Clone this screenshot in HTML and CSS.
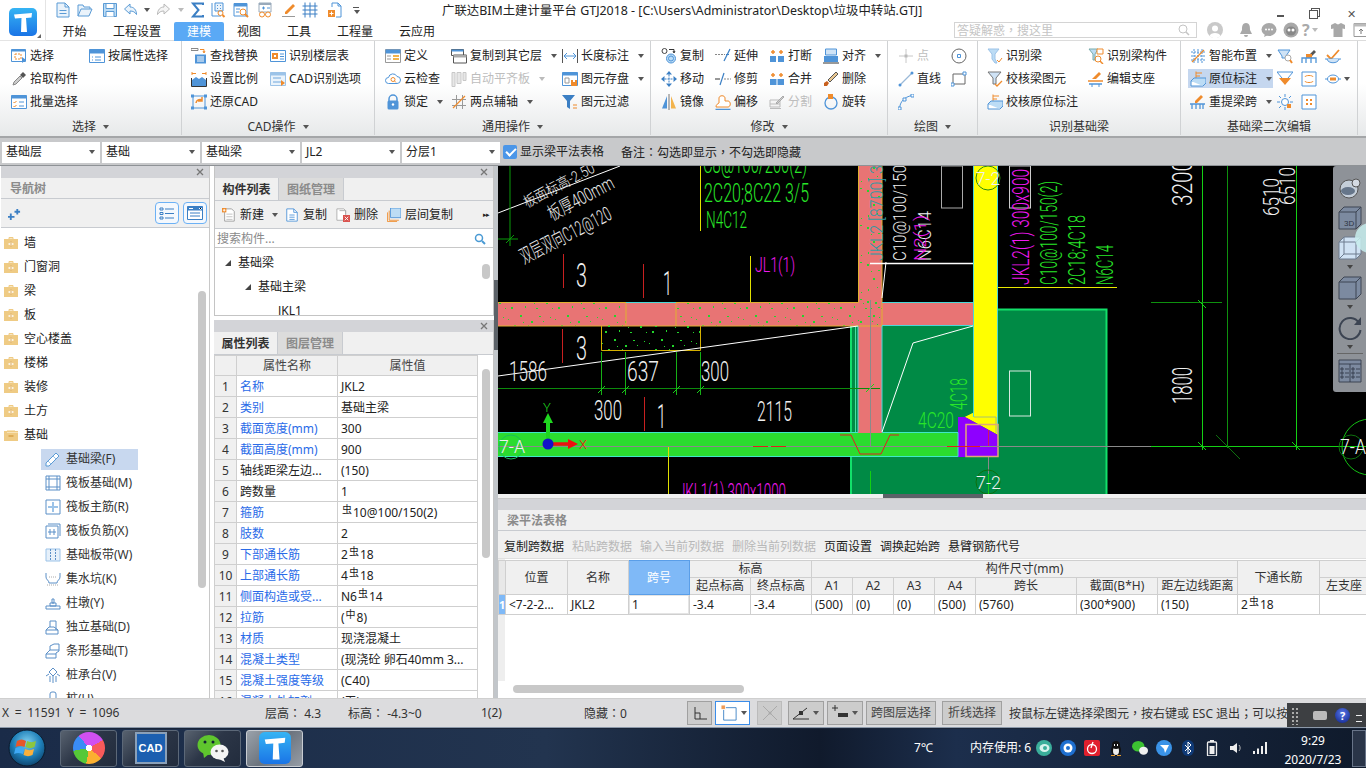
FILE: index.html
```html
<!DOCTYPE html>
<html lang="zh-CN">
<head>
<meta charset="utf-8">
<title>广联达BIM土建计量平台 GTJ2018</title>
<link rel="stylesheet" href="styles.css">
</head>
<body>
<svg class="sprite" aria-hidden="true">
<defs>
<linearGradient id="gT" x1="0" y1="0" x2="0" y2="1"><stop offset="0" stop-color="#35b4f4"/><stop offset="1" stop-color="#1a74e6"/></linearGradient>
<radialGradient id="gOrb" cx=".5" cy=".35" r=".7"><stop offset="0" stop-color="#7fd0f0"/><stop offset=".55" stop-color="#1e7fb8"/><stop offset="1" stop-color="#0b3a62"/></radialGradient>
</defs>
<symbol id="t-logo" viewBox="0 0 28 28"><rect width="28" height="28" rx="5" fill="url(#gT)"/><path d="M5 6.500 23 5l-.5 4.500-5.500.5 1 14h-6l.5-14-6.500.5z" fill="#fff"/></symbol>
<symbol id="p-x" viewBox="0 0 8 8"><path d="m1 1 6 6M7 1 1 7" stroke="#777" stroke-width="1.300"/></symbol>
<symbol id="q-doc" viewBox="0 0 16 16"><path d="M2 1h8l4 4v10H2z" fill="#eaf3fb" stroke="#5b9bd5"/><path d="M10 1v4h4M4.500 8.500h7M4.500 11.500h7" fill="none" stroke="#5b9bd5"/></symbol>
<symbol id="q-open" viewBox="0 0 16 16"><path d="M1 14V3h5l1 2h6v2" fill="#eaf3fb" stroke="#5b9bd5"/><path d="M1 14 4 7h11l-3 7z" fill="#eaf3fb" stroke="#5b9bd5"/></symbol>
<symbol id="q-save" viewBox="0 0 16 16"><path d="M1.500 1.500h13v13h-13z" fill="#bcdcf5" stroke="#5b9bd5"/><path d="M4 1.500h8v5H4z" fill="#fff" stroke="#5b9bd5"/><path d="M4 14.500v-5h8v5" fill="#fff" stroke="#5b9bd5"/></symbol>
<symbol id="q-undo" viewBox="0 0 16 16"><path d="M7 2 1.500 7 7 12V9c3 0 5 1 6.500 3.500C13.500 8 11 5 7 5z" fill="#eaf3fb" stroke="#5b9bd5"/></symbol>
<symbol id="q-redo" viewBox="0 0 16 16"><path d="M9 2l5.500 5L9 12V9c-3 0-5 1-6.500 3.500C2.500 8 5 5 9 5z" fill="#f5f5f5" stroke="#b8b8b8"/></symbol>
<symbol id="q-sum" viewBox="0 0 16 16"><path d="M13 3V1.500H3L8.500 8 3 14.500h10V13" fill="none" stroke="#3b7fc4" stroke-width="2"/></symbol>
<symbol id="q-bs" viewBox="0 0 16 16"><path d="M2 1v13h9" fill="none" stroke="#4f94d8"/><path d="M5 1h8v8H5z" fill="#eaf3fb" stroke="#4f94d8"/><path d="M7 3h1v1H7zM10 3h1v1h-1zM7 6h1v1H7zM10 6h1v1h-1z" fill="#4f94d8"/><circle cx="10.500" cy="11" r="2.500" fill="none" stroke="#ef8b2c"/><path d="m12.500 13 2 2" stroke="#ef8b2c" stroke-width="2"/></symbol>
<symbol id="q-ts" viewBox="0 0 16 16"><path d="M1 1.500h13V14H1z" fill="#fff" stroke="#4f94d8"/><path d="M1 1.500h13v3H1z" fill="#4f94d8"/><path d="M3 7h4M3 10h3" stroke="#4f94d8"/><circle cx="10" cy="10" r="3" fill="#fff" stroke="#ef8b2c"/><path d="m12 12 3 3" stroke="#ef8b2c" stroke-width="2"/></symbol>
<symbol id="q-gl" viewBox="0 0 16 16"><path d="M2 1h12v9H2z" fill="#fff" stroke="#9ab"/><path d="M2 1h12v2H2z" fill="#9ab"/><path d="M5 6h3M6.500 4.500v3M10 6h3" stroke="#4f94d8"/><circle cx="5" cy="12.500" r="2.500" fill="#fff" stroke="#ef8b2c"/><circle cx="11" cy="12.500" r="2.500" fill="#fff" stroke="#ef8b2c"/><path d="M7.500 12.500h1" stroke="#ef8b2c"/></symbol>
<symbol id="q-pen" viewBox="0 0 16 16"><path d="M4 10 12 2l2 2-8 8H4z" fill="#ef8b2c"/><path d="M1 14.500h13" stroke="#999"/></symbol>
<symbol id="q-grid" viewBox="0 0 16 16"><path d="M.5 4h15M.5 8h15M.5 12h15M3 .5v15M8 .5v15M13 .5v15" stroke="#3b7fc4"/></symbol>
<symbol id="q-plus" viewBox="0 0 16 16"><path d="M5 1h6l3 3v11H9" fill="none" stroke="#4f94d8"/><path d="M5 1v4M11 1v3h3" fill="none" stroke="#4f94d8"/><path d="M1 8h7v7H1z" fill="#ef8b2c"/><path d="M4.500 9.500v4M2.500 11.500h4" stroke="#fff"/></symbol>
<symbol id="r-sel" viewBox="0 0 16 16"><path d="M.5 1.500h14v12H.5z" fill="#fff" stroke="#4f94d8"/><path d="M.5 1.500h14v2H.5z" fill="#4f94d8"/><path d="M4 6h6v5H4z" fill="none" stroke="#ef8b2c" stroke-dasharray="2 1"/><path d="M11 9v6l4-3z" fill="#4f94d8"/></symbol>
<symbol id="r-attr" viewBox="0 0 16 16"><path d="M.5 1.500h15v13H.5z" fill="#fff" stroke="#4f94d8"/><path d="M.5 1.500h15v4H.5z" fill="#4f94d8"/><path d="M6 9h6M6 12h6M3 9h1M3 12h1" stroke="#4f94d8"/></symbol>
<symbol id="r-drop" viewBox="0 0 16 16"><path d="M3 11 9 5l2 2-6 6-3 1z" fill="#ccc" stroke="#888"/><path d="m9 4 3-3 3 3-3 3z" fill="#555"/></symbol>
<symbol id="r-batch" viewBox="0 0 16 16"><path d="M.5 1.500h15v13H.5z" fill="#fff" stroke="#4f94d8"/><path d="M.5 1.500h15v3H.5z" fill="#4f94d8"/><path d="M2.500 8l1 1 2-2M2.500 12l1 1 2-2" fill="none" stroke="#ef8b2c"/><path d="M8 8h5M8 12h5" stroke="#4f94d8"/></symbol>
<symbol id="r-find" viewBox="0 0 16 16"><path d="M0 .5h7v2H0z" fill="none" stroke="#888"/><path d="M9 1.500h4v3M12 3l1 2 1-2" fill="none" stroke="#ef8b2c"/><path d="M4 6.500h11v9H4z" fill="#4f94d8"/><path d="M6 9h7M6 11h7M6 13h7" stroke="#fff"/></symbol>
<symbol id="r-scale" viewBox="0 0 16 16"><path d="M1 9l4-3 3 2 3-2 4 3v6H1z" fill="#4f94d8"/><path d="M.5 7v8.500h15V7" fill="none" stroke="#333"/><path d="M1 2.500h4M11 2.500h4M1 1v3M15 1v3" stroke="#ef8b2c"/></symbol>
<symbol id="r-restore" viewBox="0 0 16 16"><path d="M2 2h12v12H2z" fill="none" stroke="#4f94d8"/><path d="M0 .5h3v3H0zM13 .5h3v3h-3zM0 12.500h3v3H0zM13 12.500h3v3h-3z" fill="#4f94d8"/><path d="M5 9a4 4 0 0 1 6-3M11 3v4H7" fill="none" stroke="#ef8b2c" stroke-width="1.500"/></symbol>
<symbol id="r-floor" viewBox="0 0 16 16"><path d="M.5 2.500h15v11H.5z" fill="#fff" stroke="#4f94d8"/><path d="M2 5h6v6H2z" fill="#ef8b2c"/><path d="M4 7h2v2H4z" fill="#fff"/><path d="M10 6h4M10 8.500h4M10 11h4" stroke="#4f94d8"/></symbol>
<symbol id="r-cad" viewBox="0 0 16 16"><path d="M.5 1.500h15v13H.5z" fill="#eaf3fb" stroke="#9cc3e8"/><path d="M.5 1.500h15v3H.5z" fill="#9cc3e8"/><path d="M3 7h8M3 11h8" stroke="#6fa6dc"/><path d="M11 9v6l4-3z" fill="#ef8b2c"/></symbol>
<symbol id="r-def" viewBox="0 0 16 16"><path d="M.5 1.500h15v13H.5z" fill="#fff" stroke="#999"/><path d="M.5 1.500h15v4H.5z" fill="#4f94d8"/><path d="M8 7h6v2H8zM8 10h6v2H8z" fill="#f2b34c"/><path d="M2 8h4M2 11h4" stroke="#999"/></symbol>
<symbol id="r-cloud" viewBox="0 0 16 16"><path d="M3.500 12.500a3 3 0 0 1 0-6 4.500 4.500 0 0 1 8.500-1 3.500 3.500 0 0 1 0 7z" fill="#fff" stroke="#4f94d8"/><circle cx="8" cy="8.500" r="2" fill="none" stroke="#ef8b2c"/><path d="m9.500 10 1.500 1.500" stroke="#ef8b2c"/></symbol>
<symbol id="r-lock" viewBox="0 0 16 16"><path d="M4 7V5a4 4 0 0 1 8 0v2" fill="none" stroke="#4f94d8" stroke-width="1.500"/><rect x="2.500" y="6.500" width="11" height="9" rx="1.500" fill="#4f94d8"/><circle cx="8" cy="10.500" r="1.200" fill="#fff"/></symbol>
<symbol id="r-copyl" viewBox="0 0 16 16"><path d="M.5 1.500h12v6H.5z" fill="#fff" stroke="#555"/><path d="M.5 1.500h12v2H.5z" fill="#4f94d8"/><path d="M2.500 7h13v8h-13z" fill="#fff" stroke="#555"/><path d="M2.500 7h13v2.500h-13z" fill="#aaa"/></symbol>
<symbol id="r-auto" viewBox="0 0 16 16"><path d="M1 1.500h3v14H1zM6 1.500h4v11H6zM12 1.500h3v8h-3z" fill="#e7e7e7" stroke="#c8c8c8"/></symbol>
<symbol id="r-two" viewBox="0 0 16 16"><path d="M1 5.500h14M1 11.500h14M5.500 1v14M11.500 1v14" stroke="#999"/><path d="M2 14 14 2" stroke="#ef8b2c" stroke-width="1.300"/></symbol>
<symbol id="r-len" viewBox="0 0 16 16"><path d="M.5 1v14M15.500 1v14" stroke="#555"/><path d="M2 8h12M5 5 2 8l3 3M11 5l3 3-3 3" fill="none" stroke="#4f94d8"/></symbol>
<symbol id="r-store" viewBox="0 0 16 16"><path d="M.5 1.500h15v13H.5z" fill="#fff" stroke="#4f94d8"/><path d="M.5 1.500h15v3H.5z" fill="#4f94d8"/><path d="M3 7h4v5H3z" fill="none" stroke="#999"/><path d="M9 9h6v6H9z" fill="#ef8b2c"/><path d="M11 9h2v2h-2z" fill="#fff"/></symbol>
<symbol id="r-filter" viewBox="0 0 16 16"><path d="M0 1h13L8 7v8L5 13V7z" fill="#3b7fc4"/><path d="M11 11h4M11 14h4" stroke="#ef8b2c"/></symbol>
<symbol id="r-copy" viewBox="0 0 16 16"><circle cx="3.500" cy="3" r="2.500" fill="#fff" stroke="#444"/><circle cx="10" cy="10.500" r="4.500" fill="#bcdcf5" stroke="#4f94d8"/><circle cx="10" cy="10.500" r="2.500" fill="none" stroke="#4f94d8"/><path d="M8 1.500h5v3M12 3l1 2 1-2" fill="none" stroke="#333"/></symbol>
<symbol id="r-move" viewBox="0 0 16 16"><path d="M8 0l3 3.500H5zM8 16l-3-3.500h6zM0 8l3.500-3v6zM16 8l-3.500 3V5z" fill="#3b7fc4"/><path d="M3.500 8h9M8 3.500v9" stroke="#3b7fc4" stroke-dasharray="2 1"/></symbol>
<symbol id="r-mirror" viewBox="0 0 16 16"><path d="M1 14.500 6 2v12.500z" fill="#4f94d8"/><path d="M10 2l5 12.500h-5z" fill="#f2b34c"/><path d="M8 0v16" stroke="#777"/></symbol>
<symbol id="r-ext" viewBox="0 0 16 16"><path d="M0 6.500h10" stroke="#888" stroke-dasharray="2 1"/><path d="M15 1 9 13" stroke="#3b7fc4" stroke-width="1.200"/><path d="M11 6.500h3" stroke="#3b7fc4"/></symbol>
<symbol id="r-trim" viewBox="0 0 16 16"><path d="M0 8h5" stroke="#333"/><path d="M9 8h7" stroke="#888" stroke-dasharray="2 1"/><path d="M9 2 5 14" stroke="#3b7fc4" stroke-width="1.200"/></symbol>
<symbol id="r-off" viewBox="0 0 16 16"><path d="M1 13c0-3 2-3 3-4V4c0-3 6-3 6 0v3h3c3 0 3 6 0 6z" fill="#fff" stroke="#ef8b2c"/><path d="M.5 15.500h15" stroke="#4f94d8" stroke-width="1.500"/></symbol>
<symbol id="r-break" viewBox="0 0 16 16"><path d="M1 8h6v6H1zM9 8h6v6H9z" fill="#4f94d8"/><path d="M4 2v4M2 4h4M12 2v4M10 4h4" stroke="#ef8b2c" stroke-width="1.500"/></symbol>
<symbol id="r-merge" viewBox="0 0 16 16"><path d="M1 8h14v6H1z" fill="#4f94d8"/><path d="M8 8v6" stroke="#fff"/><path d="M4 2v4M2 4h4M12 2v4M10 4h4" stroke="#ef8b2c" stroke-width="1.500"/></symbol>
<symbol id="r-split" viewBox="0 0 16 16"><path d="M1 6h10v7H1z" fill="#f4f4f4" stroke="#bbb"/><path d="M1 14.500h11M1 10h10" stroke="#bbb"/><path d="m7 9 7-7 1 1-7 7z" fill="#ccc" stroke="#aaa"/></symbol>
<symbol id="r-align" viewBox="0 0 16 16"><path d="M2.500 1h11v6h-11z" fill="#cfe3f6" stroke="#4f94d8"/><path d="M1 8h14v6H1z" fill="#4f94d8"/><path d="M0 15h16" stroke="#333"/></symbol>
<symbol id="r-del" viewBox="0 0 16 16"><path d="m1 12 3-2 2 2-2 3H1z" fill="#c8601e"/><path d="M5 9 13 1l2 2-8 8z" fill="#e8c690" stroke="#555"/></symbol>
<symbol id="r-rot" viewBox="0 0 16 16"><circle cx="8" cy="9" r="6" fill="none" stroke="#4f94d8" stroke-width="1.300"/><path d="M5 0h5v5H5z" fill="#ef8b2c"/></symbol>
<symbol id="r-pt" viewBox="0 0 16 16"><path d="M8 1v14M1 8h14" stroke="#c8c8c8"/><rect x="6.500" y="6.500" width="3" height="3" fill="#bbb"/></symbol>
<symbol id="r-line" viewBox="0 0 16 16"><path d="M2 14 14 2" stroke="#9ab9d8" stroke-width="1.300"/><circle cx="2" cy="14" r="1.500" fill="#4f94d8"/><circle cx="14" cy="2" r="1.500" fill="#4f94d8"/></symbol>
<symbol id="r-arc" viewBox="0 0 16 16"><path d="M1.500 14.500C2 8 6 3 14 1.500" fill="none" stroke="#4f94d8"/><path d="M0 13h3v3H0zM5 4h3v3H5zM13 0h3v3h-3z" fill="#fff" stroke="#4f94d8"/></symbol>
<symbol id="r-circ" viewBox="0 0 16 16"><circle cx="8" cy="8" r="7" fill="none" stroke="#666"/><path d="M6.500 6.500h3v3h-3z" fill="#fff" stroke="#4f94d8"/></symbol>
<symbol id="r-rect" viewBox="0 0 16 16"><path d="M2 3h12v10H2z" fill="none" stroke="#666"/><path d="M12 1h3v3h-3zM0 12h3v3H0z" fill="#fff" stroke="#4f94d8"/></symbol>
<symbol id="r-rb" viewBox="0 0 16 16"><path d="M1 1h11L8 6v5l2 4H8L5 11V6z" fill="#bcdcf5" stroke="#9cc3e8"/><path d="m10 12 2 2 3-4" fill="none" stroke="#ef8b2c"/></symbol>
<symbol id="r-rbc" viewBox="0 0 16 16"><path d="M1 1h9L7 6v6L5 12V6z" fill="#bcdcf5" stroke="#7aa"/><path d="M9 1h6v5h-6z" fill="#fff" stroke="#ef8b2c"/><circle cx="10" cy="11" r="3" fill="none" stroke="#ef8b2c"/><path d="m12 13 3 3" stroke="#ef8b2c" stroke-width="1.500"/></symbol>
<symbol id="r-chk" viewBox="0 0 16 16"><path d="M1 1h13L9 7v6H6V7z" fill="#cfe3f6" stroke="#777"/><path d="m8 13 2 2 5-5" fill="none" stroke="#ef8b2c" stroke-width="1.300"/></symbol>
<symbol id="r-sup" viewBox="0 0 16 16"><path d="m4 8 7-7 2 2-5 5z" fill="#ef8b2c"/><path d="M0 10h15" stroke="#ef8b2c" stroke-width="1.500"/><path d="M1 13h13" stroke="#4f94d8" stroke-width="1.500"/><path d="M4 13v3M11 13v3" stroke="#4f94d8"/></symbol>
<symbol id="r-orig" viewBox="0 0 16 16"><path d="M6 .5v7M6 2h6M6 5h4" fill="none" stroke="#ef8b2c"/><path d="M1 10h12v5H1z" fill="#fff" stroke="#4f94d8"/><path d="M1 10l3-3h12v5l-3 3" fill="#bcdcf5" stroke="#4f94d8"/></symbol>
<symbol id="r-smart" viewBox="0 0 16 16"><path d="M1 4h14M1 8h14M1 12h14M4 1v14M8 1v14M12 1v14" stroke="#4f94d8" stroke-dasharray="2 1"/><path d="M2 14 14 2" stroke="#ef8b2c" stroke-width="1.300"/></symbol>
<symbol id="r-ret" viewBox="0 0 16 16"><path d="m5 7 6-6 2 2-6 6H5z" fill="#ef8b2c"/><path d="M0 10h15M2 10v5M13 10v5M6 10v5M10 10v5" fill="none" stroke="#4f94d8" stroke-width="1.300"/></symbol>
<symbol id="r-a1" viewBox="0 0 16 16"><path d="M1 2h12l-4 6v2H5V8z" fill="#cfe3f6" stroke="#4f94d8"/><circle cx="11" cy="10" r="3" fill="#fff" stroke="#aaa"/><path d="m13 12 2 3" stroke="#ef8b2c" stroke-width="2"/></symbol>
<symbol id="r-a2" viewBox="0 0 16 16"><path d="m7 8 6-6 2 2-6 6z" fill="#555"/><path d="M5 6h6v4H5z" fill="#ef8b2c"/><path d="M1 15v-5h14v5M5 10v5M10 10v5" fill="none" stroke="#4f94d8" stroke-width="1.300"/></symbol>
<symbol id="r-a3" viewBox="0 0 16 16"><path d="m2 7 4 4 8-9" fill="none" stroke="#ef8b2c" stroke-width="1.800"/><path d="M0 11h16" stroke="#4f94d8"/><path d="M2 11c1 5 11 5 12 0" fill="#cfe3f6" stroke="#4f94d8"/></symbol>
<symbol id="r-b1" viewBox="0 0 16 16"><path d="M0 1h16l-5 6v2H5V7z" fill="#fff" stroke="#4f94d8"/><path d="M2 7h12l-6 7z" fill="#ef8b2c"/></symbol>
<symbol id="r-b2" viewBox="0 0 16 16"><path d="M1 1h14v14H1z" fill="#fff" stroke="#4f94d8"/><path d="M4 6c0-2 8-2 8 0M4 10c0 2 8 2 8 0" fill="none" stroke="#ef8b2c"/></symbol>
<symbol id="r-b3" viewBox="0 0 16 16"><path d="M0 8h16" stroke="#4f94d8"/><ellipse cx="8" cy="8" rx="5.500" ry="4" fill="#fff" stroke="#4f94d8"/><path d="M5 6.500h6v3H5z" fill="#ef8b2c"/></symbol>
<symbol id="r-c1" viewBox="0 0 16 16"><circle cx="8" cy="8" r="3.500" fill="#fff" stroke="#4f94d8"/><path d="M8 0v3M8 13v3M0 8h3M13 8h3M2 2l2 2M14 2l-2 2M2 14l2-2" stroke="#4f94d8"/><path d="M10 10h4v4h-4z" fill="#ef8b2c"/></symbol>
<symbol id="r-c2" viewBox="0 0 16 16"><path d="M1 1h14v14H1z" fill="#fff" stroke="#4f94d8"/><path d="M5 5h2v2H5zM9 5h2v2H9zM5 9h2v2H5zM9 9h2v2H9z" fill="#ef8b2c"/></symbol>
<symbol id="n-stars" viewBox="0 0 14 14"><path d="M3 6v7M0 9.500h7M10 1v6M7 4h6" stroke="#3b7fc4" stroke-width="2"/></symbol>
<symbol id="n-list" viewBox="0 0 16 16"><path d="M1 3h3v2H1zM1 7.500h3v2H1zM1 12h3v2H1z" fill="none" stroke="#3b7fc4"/><path d="M6 4h9M6 8.500h9M6 13h9" stroke="#3b7fc4"/></symbol>
<symbol id="n-win" viewBox="0 0 16 16"><path d="M.5 1.500h15v13H.5z" fill="#fff" stroke="#3b7fc4"/><path d="M.5 1.500h15v4H.5z" fill="#3b7fc4"/><path d="M2 3.500h4M12 3l1.500 1.500L15 3" stroke="#fff"/><path d="M3 8h10M3 11h10" stroke="#3b7fc4"/></symbol>
<symbol id="n-fold" viewBox="0 0 14 14"><path d="M0 3h14v10H0z" fill="#efcb84"/><path d="M5 1.500h4V3H5z" fill="none" stroke="#efcb84"/><path d="M4.500 8h5M7 5.500v5" stroke="#fff" stroke-width="1.300"/><path d="M6 5h2v6H6z" fill="#d69b3d" opacity=".45"/></symbol>
<symbol id="n-open" viewBox="0 0 14 14"><path d="M0 3h14v10H0z" fill="#efcb84"/><path d="M3 4.500h11M3 2.500h8" stroke="#f7e3b8"/><path d="M4.500 8h5" stroke="#d69b3d" stroke-width="1.300"/></symbol>
<symbol id="n-beam" viewBox="0 0 16 16"><path d="M1 12 11 2l3 3L4 15H1z" fill="#fff" stroke="#5b9bd5"/><path d="m3 10 3 3M8 5l3 3" stroke="#9cc3e8"/></symbol>
<symbol id="n-raft" viewBox="0 0 16 16"><path d="M1 1h14v14H1z" fill="none" stroke="#5b8fc7"/><path d="M4 4h8v8H4zM1 4h3M12 4h3M1 12h3M12 12h3M4 1v3M12 1v3M4 12v3M12 12v3" fill="none" stroke="#5b8fc7"/></symbol>
<symbol id="n-rmain" viewBox="0 0 16 16"><path d="M1 1h14v14H1z" fill="none" stroke="#5b8fc7"/><path d="M8 3v10M3 8h10" stroke="#9cc3e8" stroke-width="2"/></symbol>
<symbol id="n-rneg" viewBox="0 0 16 16"><path d="M3 1h12v12" fill="none" stroke="#5b8fc7"/><path d="M1 3h12v12H1z" fill="#fff" stroke="#5b8fc7"/><path d="M5 6v6M9 6v6M3 9h8" stroke="#5b8fc7"/></symbol>
<symbol id="n-band" viewBox="0 0 16 16"><path d="M1 2h14v12H1z" fill="#e6f0fa" stroke="#9cc3e8"/><path d="M5.500 2v12M10.500 2v12" stroke="#5b8fc7" stroke-dasharray="2 1"/></symbol>
<symbol id="n-pit" viewBox="0 0 16 16"><path d="M1 2v4c0 3 3 3 3 6h8c0-3 3-3 3-6V2" fill="none" stroke="#5b8fc7"/><path d="M4 6h8M2 14h12" stroke="#aaa" stroke-dasharray="1 1"/></symbol>
<symbol id="n-ped" viewBox="0 0 16 16"><path d="M1 11h14v3H1zM5 8h6v3H5zM7 4h2v4H7z" fill="#fff" stroke="#5b8fc7"/></symbol>
<symbol id="n-ind" viewBox="0 0 16 16"><path d="M1 11h12v4H1zM1 11l3-3h5l4 3M5 8V2h6v9" fill="#fff" stroke="#5b8fc7"/></symbol>
<symbol id="n-strip" viewBox="0 0 16 16"><path d="M1 15v-4l4-4V3l4-2h5v7l-3 2v5z" fill="#fff" stroke="#5b8fc7"/><path d="M1 11h10M5 7h9" stroke="#5b8fc7"/></symbol>
<symbol id="n-cap" viewBox="0 0 16 16"><path d="M4 5l4-4 4 4-4 4z" fill="#fff" stroke="#5b8fc7"/><path d="M5 9v6M8 9v7M11 9v6M4 7 1 9M12 7l3 2" stroke="#5b8fc7"/></symbol>
<symbol id="n-pile" viewBox="0 0 16 16"><rect x="5" y="1" width="6" height="14" rx="2" fill="#fff" stroke="#5b8fc7"/></symbol>
<symbol id="m-new" viewBox="0 0 16 16"><path d="M3 1h8l3 3v11H3z" fill="#fff" stroke="#999"/><path d="M5 7h7M5 10h7M5 13h7" stroke="#bbb"/><path d="M0 0h5v5H0z" fill="#ef8b2c"/><path d="M2.500 1v3M1 2.500h3" stroke="#fff"/></symbol>
<symbol id="m-copy" viewBox="0 0 16 16"><path d="M2 1h8l4 4v10H2z" fill="#fff" stroke="#4f94d8"/><path d="M10 1v4h4M5 8h6M5 10.500h6M5 13h6" fill="none" stroke="#4f94d8"/></symbol>
<symbol id="m-del" viewBox="0 0 16 16"><path d="M1 1h8l2 2v11H1z" fill="#fff" stroke="#aaa"/><path d="M4 3h7v4" fill="none" stroke="#aaa"/><path d="M8 8h8v8H8z" fill="#d9534f"/><path d="m10 10 4 4M14 10l-4 4" stroke="#fff"/></symbol>
<symbol id="m-lc" viewBox="0 0 16 16"><path d="M4 0h12v11H4z" fill="#bcdcf5" stroke="#4f94d8"/><path d="M2.500 3v11h11M.5 5v10.500h11" fill="none" stroke="#ef8b2c"/></symbol>
<symbol id="m-search" viewBox="0 0 12 12"><circle cx="5" cy="5" r="3.500" fill="none" stroke="#4a9ad4" stroke-width="1.500"/><path d="m8 8 3 3" stroke="#4a9ad4" stroke-width="2"/></symbol>
<symbol id="m-searchg" viewBox="0 0 12 12"><circle cx="5" cy="5" r="4" fill="none" stroke="#c4c4c4"/><path d="m8 8 3 3" stroke="#c4c4c4" stroke-width="1.500"/></symbol>
<symbol id="s-corner" viewBox="0 0 16 16"><path d="M3 2v12h12M3 8h5v6" fill="none" stroke="#333"/></symbol>
<symbol id="s-box" viewBox="0 0 18 18"><path d="M3 3h14v14H3z" fill="#fff" stroke="#3b7fc4"/><path d="M0 0h5v5H0z" fill="#ef9a54" stroke="#fff"/></symbol>
<symbol id="s-x" viewBox="0 0 16 16"><path d="m1 1 14 14M15 1 1 15" stroke="#aaa"/><circle cx="8" cy="8" r="1.500" fill="#aaa"/></symbol>
<symbol id="s-ang" viewBox="0 0 16 16"><path d="M0 14 14 3M0 14h16" stroke="#333"/><rect x="6" y="6" width="4" height="4" fill="#333"/></symbol>
<symbol id="s-plusb" viewBox="0 0 16 16"><path d="M3 0v6M0 3h6" stroke="#333"/><path d="M6 8h10v4H6z" fill="#333"/></symbol>
<symbol id="w-orb" viewBox="0 0 38 38"><circle cx="19" cy="19" r="18" fill="url(#gOrb)" stroke="#0a1a2c"/><path d="M9 12c3-2 6-2 9 0l-1.500 6c-3-1.500-6-1.500-9 0z" fill="#e8562a"/><path d="M19 12c3 1.500 6 1.500 9 0l-1.500 6c-3 1.500-6 1.500-9 0z" fill="#8dc63f"/><path d="M7.500 19c3-1.500 6-1.500 9 0L15 25c-3-1.500-6-1.500-9 0z" fill="#3fa9f5"/><path d="M17 20c3 1.500 6 1.500 9 0l-1.500 6c-3 1.500-6 1.500-9 0z" fill="#fbb03b"/></symbol>
<symbol id="w-chat" viewBox="0 0 32 28"><ellipse cx="12" cy="11" rx="11.500" ry="10" fill="#5fc52e"/><path d="m6 18 1 6 5-4z" fill="#5fc52e"/><circle cx="8" cy="8" r="1.500" fill="#123"/><circle cx="16" cy="8" r="1.500" fill="#123"/><ellipse cx="22.500" cy="18" rx="9" ry="7.500" fill="#f4f4f4"/><path d="m26 23 2 5-6-3z" fill="#f4f4f4"/><circle cx="19.500" cy="17" r="1.300" fill="#555"/><circle cx="25.500" cy="17" r="1.300" fill="#555"/></symbol>
<symbol id="y-a" viewBox="0 0 16 16"><circle cx="8" cy="8" r="8" fill="#3bae9b"/><ellipse cx="8.500" cy="8" rx="5" ry="4" fill="#d8f3ee"/><circle cx="9" cy="8" r="2" fill="#3bae9b"/></symbol>
<symbol id="y-b" viewBox="0 0 16 16"><circle cx="8" cy="8" r="8" fill="#1e6fd0"/><circle cx="8" cy="8" r="4.500" fill="#fff"/><circle cx="8" cy="8" r="2" fill="#1e6fd0"/></symbol>
<symbol id="y-c" viewBox="0 0 16 16"><rect width="16" height="16" rx="2" fill="#e01f2d"/><circle cx="8" cy="9" r="4.500" fill="none" stroke="#fff" stroke-width="1.300"/><path d="M9 2 7 8" stroke="#fff" stroke-width="1.300"/></symbol>
<symbol id="y-d" viewBox="0 0 16 16"><ellipse cx="8" cy="10" rx="5" ry="6" fill="#111"/><ellipse cx="8" cy="11" rx="3" ry="4" fill="#eee"/><circle cx="8" cy="5" r="4" fill="#111"/><path d="M6 4h1v2H6zM9 4h1v2H9z" fill="#fff"/><path d="M3 15h4v1H3zM9 15h4v1H9z" fill="#e89a2a"/></symbol>
<symbol id="y-e" viewBox="0 0 18 16"><ellipse cx="7" cy="6" rx="7" ry="6" fill="#3cc232"/><ellipse cx="13" cy="11" rx="5" ry="4.500" fill="#f0f0f0"/></symbol>
<symbol id="y-f" viewBox="0 0 16 16"><circle cx="8" cy="8" r="8" fill="#3a93e8"/><path d="M4 5h9l-4 8-1-4z" fill="#fff"/></symbol>
<symbol id="y-g" viewBox="0 0 16 16"><rect x="2" width="12" height="16" rx="6" fill="#0f3a78"/><path d="m5 5 6 6-3 3V2l3 3-6 6" fill="none" stroke="#fff"/></symbol>
<symbol id="y-h" viewBox="0 0 16 16"><path d="M6 0h4v2H6z" fill="#eee"/><rect x="3.500" y="2" width="9" height="14" rx="1" fill="none" stroke="#eee" stroke-width="1.300"/><path d="M5.500 6h5v8h-5z" fill="#eee"/></symbol>
<symbol id="y-i" viewBox="0 0 16 16"><path d="M2 6h3l4-3v10l-4-3H2z" fill="#eee"/><path d="M11 5c1.500 2 1.500 4 0 6" fill="none" stroke="#bbb"/></symbol>
<symbol id="y-j" viewBox="0 0 16 16"><path d="M1 11h2v3H1zM5 8.500h2V14H5zM9 6h2v8H9zM13 2h2v12h-2z" fill="#eee"/></symbol>
<symbol id="f-sphere" viewBox="0 0 24 24"><circle cx="11" cy="13" r="9" fill="#c4ced9" stroke="#555"/><ellipse cx="10" cy="15" rx="7" ry="4" fill="#66768a"/><circle cx="18" cy="7" r="4" fill="#d4dae2" stroke="#555"/></symbol>
<symbol id="f-cube" viewBox="0 0 24 24"><path d="M1 6l5-5h17v17l-5 5H1z" fill="#7c8aa0" stroke="#3c4452"/><path d="M1 6h17v17M18 6l5-5" fill="none" stroke="#3c4452"/></symbol>
<symbol id="f-light" viewBox="0 0 24 24"><path d="M1 6l5-5h17v17l-5 5H1z" fill="#d0e2f4" stroke="#6d7b8e"/><path d="M1 6h17v17M18 6l5-5M1 23l5-5h17M6 1v17" fill="none" stroke="#6d7b8e"/></symbol>
<symbol id="f-rot" viewBox="0 0 24 24"><path d="M21 7A10.500 10.500 0 1 0 22.500 14" fill="none" stroke="#3c4452" stroke-width="2"/><path d="m16 9 7 0V1z" fill="#3c4452"/></symbol>
<symbol id="f-tab" viewBox="0 0 24 24"><path d="M1 1h22v22H1z" fill="#7c8aa0" stroke="#3c4452"/><path d="M1 5h22M12 5v18M3 9h2v2H3zM3 13h2v2H3zM3 17h2v2H3zM14 9h2v2h-2zM14 13h2v2h-2zM14 17h2v2h-2zM7 10h4M7 14h4M7 18h4M18 10h4M18 14h4M18 18h4" fill="none" stroke="#2c3442" stroke-width=".8"/></symbol>
<symbol id="z-avatar" viewBox="0 0 16 16"><circle cx="8" cy="8" r="8" fill="#c9c9c9"/><circle cx="8" cy="6.500" r="3" fill="#fff"/><path d="M2.500 14c1-4 10-4 11 0a8 8 0 0 1-11 0z" fill="#fff"/></symbol>
<symbol id="z-bell" viewBox="0 0 16 16"><path d="M8 1c4 0 4 4 4 7l2 4H2l2-4c0-3 0-7 4-7zM6 13h4a2 2 0 0 1-4 0z" fill="#a8a8a8"/></symbol>
<symbol id="z-chat" viewBox="0 0 16 16"><ellipse cx="8" cy="7.500" rx="7.500" ry="6.500" fill="#a8a8a8"/><path d="m4 12-1 3 4-2z" fill="#a8a8a8"/><circle cx="5" cy="7.500" r="1" fill="#fff"/><circle cx="8" cy="7.500" r="1" fill="#fff"/><circle cx="11" cy="7.500" r="1" fill="#fff"/></symbol>
<symbol id="z-face" viewBox="0 0 16 16"><circle cx="8" cy="8" r="7.500" fill="#a8a8a8"/><ellipse cx="8" cy="9" rx="5" ry="4.500" fill="#888"/><circle cx="6" cy="8" r="1.500" fill="#fff"/><circle cx="10" cy="8" r="1.500" fill="#fff"/></symbol>
<symbol id="z-shirt" viewBox="0 0 16 16"><path d="M5 1 1 3v4l2.500-.5V15h9V6.500L15 7V3l-4-2-3 1.500z" fill="#a8a8a8"/></symbol>
<symbol id="z-up" viewBox="0 0 16 16"><path d="M1 1.500h14v13H1z" fill="#fff" stroke="#999"/><path d="M1 1.500h14v3H1z" fill="#bbb"/><path d="M8 7v5M6 9l2-2 2 2" fill="none" stroke="#777"/></symbol>
</svg>

<header class="top">
  <div class="logo"><svg class="logo-t"><use href="#t-logo"/></svg><i class="logo-corner"></i></div>
  <div class="top-main">
    <div class="qrow">
      <div class="qa">
        <svg class="ic q"><use href="#q-doc"/></svg><svg class="ic q"><use href="#q-open"/></svg><svg class="ic q"><use href="#q-save"/></svg><svg class="ic q"><use href="#q-undo"/></svg><i class="caret"></i><svg class="ic q"><use href="#q-redo"/></svg><i class="caret light"></i><svg class="ic q"><use href="#q-sum"/></svg><svg class="ic q"><use href="#q-bs"/></svg><svg class="ic q"><use href="#q-ts"/></svg><svg class="ic q"><use href="#q-gl"/></svg><svg class="ic q"><use href="#q-pen"/></svg><svg class="ic q"><use href="#q-grid"/></svg><svg class="ic q"><use href="#q-plus"/></svg><span class="qmore"><i></i><i class="caret"></i></span>
      </div>
      <div class="title">广联达BIM土建计量平台 GTJ2018 - [C:\Users\Administrator\Desktop\垃圾中转站.GTJ]</div>
      <div class="winbtns"><span class="win-min"></span><span class="win-max"></span><span class="win-x">✕</span></div>
    </div>
    <div class="trow">
      <nav class="tabs">
        <span>开始</span><span>工程设置</span><span class="on">建模</span><span>视图</span><span>工具</span><span>工程量</span><span>云应用</span>
      </nav>
      <div class="search"><span>答疑解惑<span class="cp" lang="zh-TW">，</span>搜这里</span><svg class="search-ic"><use href="#m-searchg"/></svg></div>
      <div class="zic">
        <svg class="ic"><use href="#z-avatar"/></svg><svg class="ic"><use href="#z-bell"/></svg><svg class="ic"><use href="#z-chat"/></svg><svg class="ic"><use href="#z-face"/></svg><span class="zq">?<i class="caret light"></i></span><svg class="ic"><use href="#z-shirt"/></svg><svg class="ic"><use href="#z-up"/></svg>
      </div>
    </div>
  </div>
</header>

<section class="ribbon">
  <div class="rg g1"><div class="rb">
    <div class="it"><svg class="ic"><use href="#r-sel"/></svg><span>选择</span></div>
    <div class="it"><svg class="ic"><use href="#r-drop"/></svg><span>拾取构件</span></div>
    <div class="it"><svg class="ic"><use href="#r-batch"/></svg><span>批量选择</span></div>
    <div class="it"><svg class="ic"><use href="#r-attr"/></svg><span>按属性选择</span></div>
  </div><div class="rl">选择<i class="caret"></i></div></div>

  <div class="rg g2"><div class="rb">
    <div class="it"><svg class="ic"><use href="#r-find"/></svg><span>查找替换</span></div>
    <div class="it"><svg class="ic"><use href="#r-scale"/></svg><span>设置比例</span></div>
    <div class="it"><svg class="ic"><use href="#r-restore"/></svg><span>还原CAD</span></div>
    <div class="it"><svg class="ic"><use href="#r-floor"/></svg><span>识别楼层表</span></div>
    <div class="it"><svg class="ic"><use href="#r-cad"/></svg><span>CAD识别选项</span></div>
  </div><div class="rl">CAD操作<i class="caret"></i></div></div>

  <div class="rg g3"><div class="rb">
    <div class="it"><svg class="ic"><use href="#r-def"/></svg><span>定义</span></div>
    <div class="it"><svg class="ic"><use href="#r-cloud"/></svg><span>云检查</span></div>
    <div class="it"><svg class="ic"><use href="#r-lock"/></svg><span>锁定</span><i class="caret"></i></div>
    <div class="it"><svg class="ic"><use href="#r-copyl"/></svg><span>复制到其它层</span><i class="caret"></i></div>
    <div class="it off"><svg class="ic"><use href="#r-auto"/></svg><span>自动平齐板</span><i class="caret light"></i></div>
    <div class="it"><svg class="ic"><use href="#r-two"/></svg><span>两点辅轴</span><i class="caret"></i></div>
    <div class="it"><svg class="ic"><use href="#r-len"/></svg><span>长度标注</span><i class="caret"></i></div>
    <div class="it"><svg class="ic"><use href="#r-store"/></svg><span>图元存盘</span><i class="caret"></i></div>
    <div class="it"><svg class="ic"><use href="#r-filter"/></svg><span>图元过滤</span></div>
  </div><div class="rl">通用操作<i class="caret"></i></div></div>

  <div class="rg g4"><div class="rb">
    <div class="it"><svg class="ic"><use href="#r-copy"/></svg><span>复制</span></div>
    <div class="it"><svg class="ic"><use href="#r-move"/></svg><span>移动</span></div>
    <div class="it"><svg class="ic"><use href="#r-mirror"/></svg><span>镜像</span></div>
    <div class="it"><svg class="ic"><use href="#r-ext"/></svg><span>延伸</span></div>
    <div class="it"><svg class="ic"><use href="#r-trim"/></svg><span>修剪</span></div>
    <div class="it"><svg class="ic"><use href="#r-off"/></svg><span>偏移</span></div>
    <div class="it"><svg class="ic"><use href="#r-break"/></svg><span>打断</span></div>
    <div class="it"><svg class="ic"><use href="#r-merge"/></svg><span>合并</span></div>
    <div class="it off"><svg class="ic"><use href="#r-split"/></svg><span>分割</span></div>
    <div class="it"><svg class="ic"><use href="#r-align"/></svg><span>对齐</span><i class="caret"></i></div>
    <div class="it"><svg class="ic"><use href="#r-del"/></svg><span>删除</span></div>
    <div class="it"><svg class="ic"><use href="#r-rot"/></svg><span>旋转</span></div>
  </div><div class="rl">修改<i class="caret"></i></div></div>

  <div class="rg g5"><div class="rb">
    <div class="it off"><svg class="ic"><use href="#r-pt"/></svg><span>点</span></div>
    <div class="it"><svg class="ic"><use href="#r-line"/></svg><span>直线</span></div>
    <div class="it"><svg class="ic"><use href="#r-arc"/></svg></div>
    <div class="it"><svg class="ic"><use href="#r-circ"/></svg></div>
    <div class="it"><svg class="ic"><use href="#r-rect"/></svg></div>
  </div><div class="rl">绘图<i class="caret"></i></div></div>

  <div class="rg g6"><div class="rb">
    <div class="it"><svg class="ic"><use href="#r-rb"/></svg><span>识别梁</span></div>
    <div class="it"><svg class="ic"><use href="#r-chk"/></svg><span>校核梁图元</span></div>
    <div class="it"><svg class="ic"><use href="#r-orig"/></svg><span>校核原位标注</span></div>
    <div class="it"><svg class="ic"><use href="#r-rbc"/></svg><span>识别梁构件</span></div>
    <div class="it"><svg class="ic"><use href="#r-sup"/></svg><span>编辑支座</span></div>
  </div><div class="rl">识别基础梁</div></div>

  <div class="rg g7"><div class="rb">
    <div class="it"><svg class="ic"><use href="#r-smart"/></svg><span>智能布置</span><i class="caret"></i></div>
    <div class="it hot"><svg class="ic"><use href="#r-orig"/></svg><span>原位标注</span><i class="caret"></i></div>
    <div class="it"><svg class="ic"><use href="#r-ret"/></svg><span>重提梁跨</span><i class="caret"></i></div>
    <div class="it"><svg class="ic"><use href="#r-a1"/></svg></div>
    <div class="it"><svg class="ic"><use href="#r-b1"/></svg></div>
    <div class="it"><svg class="ic"><use href="#r-c1"/></svg></div>
    <div class="it"><svg class="ic"><use href="#r-a2"/></svg></div>
    <div class="it"><svg class="ic"><use href="#r-b2"/></svg></div>
    <div class="it"><svg class="ic"><use href="#r-c2"/></svg></div>
    <div class="it"><svg class="ic"><use href="#r-a3"/></svg></div>
    <div class="it tight"><svg class="ic"><use href="#r-b3"/></svg><i class="caret"></i></div>
  </div><div class="rl">基础梁二次编辑</div></div>
</section>

<section class="selbar">
  <div class="dd"><span>基础层</span><i class="caret"></i></div>
  <div class="dd"><span>基础</span><i class="caret"></i></div>
  <div class="dd"><span>基础梁</span><i class="caret"></i></div>
  <div class="dd"><span>JL2</span><i class="caret"></i></div>
  <div class="dd"><span>分层1</span><i class="caret"></i></div>
  <label class="chk"><i class="box"></i><span>显示梁平法表格</span></label>
  <span class="note">备注<span class="cp" lang="zh-TW">：</span>勾选即显示<span class="cp" lang="zh-TW">，</span>不勾选即隐藏</span>
</section>

<main class="main">
  <aside class="nav">
    <div class="strip"><svg class="xx"><use href="#p-x"/></svg></div>
    <div class="ptitle">导航树</div>
    <div class="navtool">
      <svg class="stars"><use href="#n-stars"/></svg>
      <span class="nbtn"><svg class="ic"><use href="#n-list"/></svg></span>
      <span class="nbtn"><svg class="ic"><use href="#n-win"/></svg></span>
    </div>
    <ul class="tree">
      <li><svg class="fold"><use href="#n-fold"/></svg>墙</li>
      <li><svg class="fold"><use href="#n-fold"/></svg>门窗洞</li>
      <li><svg class="fold"><use href="#n-fold"/></svg>梁</li>
      <li><svg class="fold"><use href="#n-fold"/></svg>板</li>
      <li><svg class="fold"><use href="#n-fold"/></svg>空心楼盖</li>
      <li><svg class="fold"><use href="#n-fold"/></svg>楼梯</li>
      <li><svg class="fold"><use href="#n-fold"/></svg>装修</li>
      <li><svg class="fold"><use href="#n-fold"/></svg>土方</li>
      <li><svg class="fold"><use href="#n-open"/></svg>基础</li>
      <li class="ch sel"><span><svg class="ic"><use href="#n-beam"/></svg>基础梁(F)</span></li>
      <li class="ch"><span><svg class="ic"><use href="#n-raft"/></svg>筏板基础(M)</span></li>
      <li class="ch"><span><svg class="ic"><use href="#n-rmain"/></svg>筏板主筋(R)</span></li>
      <li class="ch"><span><svg class="ic"><use href="#n-rneg"/></svg>筏板负筋(X)</span></li>
      <li class="ch"><span><svg class="ic"><use href="#n-band"/></svg>基础板带(W)</span></li>
      <li class="ch"><span><svg class="ic"><use href="#n-pit"/></svg>集水坑(K)</span></li>
      <li class="ch"><span><svg class="ic"><use href="#n-ped"/></svg>柱墩(Y)</span></li>
      <li class="ch"><span><svg class="ic"><use href="#n-ind"/></svg>独立基础(D)</span></li>
      <li class="ch"><span><svg class="ic"><use href="#n-strip"/></svg>条形基础(T)</span></li>
      <li class="ch"><span><svg class="ic"><use href="#n-cap"/></svg>桩承台(V)</span></li>
      <li class="ch"><span><svg class="ic"><use href="#n-pile"/></svg>桩(U)</span></li>
    </ul>
    <i class="vbar navbar"></i>
  </aside>

  <section class="mid">
    <div class="comp">
      <div class="strip"><svg class="xx"><use href="#p-x"/></svg></div>
      <div class="ptabs"><span class="on">构件列表</span><span>图纸管理</span></div>
      <div class="ctool">
        <span class="ct ct-new"><svg class="ic"><use href="#m-new"/></svg>新建<i class="caret"></i></span>
        <span class="ct ct-copy"><svg class="ic"><use href="#m-copy"/></svg>复制</span>
        <span class="ct ct-del"><svg class="ic"><use href="#m-del"/></svg>删除</span>
        <span class="ct ct-lc"><svg class="ic"><use href="#m-lc"/></svg>层间复制</span>
        <span class="more">▸▸</span>
      </div>
      <div class="csearch"><span>搜索构件...</span><svg class="search-b"><use href="#m-search"/></svg></div>
      <ul class="ctree">
        <li class="l1"><i class="tri"></i>基础梁</li>
        <li class="l2"><i class="tri"></i>基础主梁</li>
        <li class="l3">JKL1</li>
      </ul>
      <i class="vbar compbar"></i>
    </div>
    <div class="attr">
      <div class="strip"><svg class="xx"><use href="#p-x"/></svg></div>
      <div class="ptabs"><span class="on">属性列表</span><span>图层管理</span></div>
      <table class="prop">
        <colgroup><col class="c0"><col class="c1"><col class="c2"></colgroup>
        <thead><tr><th></th><th>属性名称</th><th>属性值</th></tr></thead>
        <tbody>
          <tr><th>1</th><td class="bl">名称</td><td>JKL2</td></tr>
          <tr><th>2</th><td class="bl">类别</td><td>基础主梁</td></tr>
          <tr><th>3</th><td class="bl">截面宽度(mm)</td><td>300</td></tr>
          <tr><th>4</th><td class="bl">截面高度(mm)</td><td>900</td></tr>
          <tr><th>5</th><td>轴线距梁左边...</td><td>(150)</td></tr>
          <tr><th>6</th><td>跨数量</td><td>1</td></tr>
          <tr><th>7</th><td class="bl">箍筋</td><td><sup>虫</sup>10@100/150(2)</td></tr>
          <tr><th>8</th><td class="bl">肢数</td><td>2</td></tr>
          <tr><th>9</th><td class="bl">下部通长筋</td><td>2<sup>虫</sup>18</td></tr>
          <tr><th>10</th><td class="bl">上部通长筋</td><td>4<sup>虫</sup>18</td></tr>
          <tr><th>11</th><td class="bl">侧面构造或受...</td><td>N6<sup>虫</sup>14</td></tr>
          <tr><th>12</th><td class="bl">拉筋</td><td>(<sup>中</sup>8)</td></tr>
          <tr><th>13</th><td class="bl">材质</td><td>现浇混凝土</td></tr>
          <tr><th>14</th><td class="bl">混凝土类型</td><td>(现浇砼 卵石40mm 3...</td></tr>
          <tr><th>15</th><td class="bl">混凝土强度等级</td><td>(C40)</td></tr>
          <tr><th>16</th><td class="bl">混凝土外加剂</td><td>(无)</td></tr>
        </tbody>
      </table>
      <i class="vbar attrbar"></i>
    </div>
  </section>

  <div class="split"><i></i></div>

  <section class="right">
    <div class="canvas">
      <svg class="cad" viewBox="498 166 868 328" width="868" height="328">
        <defs>
          <pattern id="spk" width="47" height="24" patternUnits="userSpaceOnUse">
            <path d="M3 3h2v2H3zM14 9h2v2h-2zM22 4h2v1h-2zM29 14h2v2h-2zM38 7h1v1h-1zM8 18h1v2H8zM19 20h2v1h-2zM35 20h1v1h-1zM44 13h2v2h-2zM11 13h1v1h-1zM26 9h1v1h-1zM17 15h1v1h-1zM41 19h2v2h-2zM33 5h1v1h-1zM6 10h1v1H6z" fill="#22d62c"/>
          </pattern>
          <pattern id="spv" width="24" height="37" patternUnits="userSpaceOnUse">
            <path d="M3 5h2v2H3zM14 11h2v1h-2zM20 3h2v1h-2zM9 19h2v2H9zM18 24h1v1h-1zM4 30h1v2H4zM21 33h1v1h-1zM13 28h1v1h-1zM7 12h1v1H7z" fill="#22d62c"/>
          </pattern>
        </defs>
        <rect x="498" y="166" width="868" height="328" fill="#000"/>
        <path d="M850 326h123v-17h133v185H850z" fill="#008a45"/>
        <path d="M851 326v168M998 309.500h108.500V494" fill="none" stroke="#12e06a" stroke-width="2"/>
        <rect x="498" y="432.500" width="460" height="24" fill="#2bdc2f"/>
        <path d="M498 432.500h460M498 456.500h460" stroke="#3fe8c8"/>
        <rect x="498" y="302" width="475" height="24" fill="#e87474"/>
        <rect x="858" y="166" width="24" height="267" fill="#e87474"/>
        <rect x="498" y="302" width="128" height="24" fill="url(#spk)"/>
        <rect x="676" y="302" width="206" height="24" fill="url(#spk)"/>
        <rect x="858" y="166" width="24" height="160" fill="url(#spv)"/>
        <path d="M498 302.500h128M676 302.500h182.500V166M882 166v160.500M498 326h384M626 302v24M676 302v24" fill="none" stroke="#e0b030"/>
        <path d="M626 302.500h50M882 302.500h91M882 325.500h91M858 326v106M882 326v106" fill="none" stroke="#49d8d8"/>
        <rect x="602" y="326" width="98" height="24" fill="url(#spk)"/>
        <path d="M601.500 326v24.500h99V326" fill="none" stroke="#d4b000"/>
        <path d="M855.500 326v106" stroke="#4ae0a0"/>

        <path d="M882 432l31-89 60-17M498 376 858 326M498 213 620 166" fill="none" stroke="#fff"/>
        <path d="M882 298l4-36" stroke="#fff"/><path d="M870 263.500h103" stroke="#fff" stroke-width="1.500"/>
        <path d="M510 166v80M498 239h20M506 243l8-8" stroke="#0a9a0a"/>
        <path d="M498 388.500h382" stroke="#0c8a0c"/>
        <path d="M601.500 352v43M625.500 352v43M676.500 352v43M700.500 352v43" stroke="#16b016"/>
        <path d="M598 393l7-7M622 393l7-7M673 393l7-7M697 393l7-7M866 392l8-8" stroke="#1ad01a"/>
        <path d="M700.500 166v65M750.500 256v46M668.500 447v47" stroke="#e0e000"/>
        <path d="M563.500 254v34M643.500 264v34M562.500 329v34M644.500 397v34" stroke="#c82020"/>
        <path d="M498 446.500h653" stroke="#8a8a8a"/>
        <path d="M870.500 300v147M988.500 426v56" stroke="#8a8a8a"/>
        <path d="M870.500 471v23" stroke="#12d012"/>
        <path d="M840 435h11l9 19h21l9-19h9" fill="none" stroke="#e02020"/>
        <path d="M753 446.500h15M771 446.500h15" stroke="#e02020"/>

        <path d="M973 166h25v253l0 16-33-18 8-4z" fill="#ffff00"/>
        <path d="M973.500 166v251M997.500 166v268" stroke="#49d8d8"/>
        <path d="M958 417h7l33 18v22h-40z" fill="#8e00ff"/>
        <path d="M958 432.500v24" stroke="#49d8d8"/>
        <path d="M965 417l8-4v5z" fill="#ffff00"/>
        <path d="M974 417h22v16" fill="none" stroke="#a8c070"/>
        <rect x="966" y="424.500" width="32" height="32" fill="none" stroke="#e0a878" stroke-width="1.500"/>
        <path d="M947 446.500h33" stroke="#e02020"/>
        <path d="M980 446.500h171" stroke="#8a8a8a"/>
        <path d="M988.500 430v16" stroke="#d01860"/>
        <rect x="941.500" y="166" width="21" height="42" fill="none" stroke="#aaa"/>
        <rect x="1009.500" y="166" width="21" height="42" fill="none" stroke="#ccc"/>
        <rect x="1009.500" y="371" width="21" height="45" fill="none" stroke="#d8e8e0"/>
        <path d="M998 287.500h119" stroke="#e8e800"/>

        <path d="M1202.500 166v284M1296.500 166v284M1151 446.500h215" stroke="#14d014"/>
        <path d="M1227.500 166v282M1151 302.500h71" stroke="#0e900e"/>
        <path d="M1198 300l8 8M1198 442l8 8M1292 442l8 8" stroke="#14d014"/>
        <path d="M1216 435l24 24" stroke="#0e700e"/>
        <circle cx="1370" cy="447" r="28" fill="none" stroke="#14c014"/>
        <circle cx="1351" cy="447" r="12" fill="none" stroke="#0e700e"/>
        <circle cx="511" cy="447" r="12" fill="none" stroke="#1ac05a"/>
        <circle cx="988" cy="178" r="12" fill="none" stroke="#2a8a10"/>
        <circle cx="988" cy="482" r="12" fill="none" stroke="#0e700e"/>
        <path d="M988.500 474v20" stroke="#14d014"/>

        <g class="t-w">
          <text transform="translate(527,208) rotate(-28)" font-size="15" textLength="78" lengthAdjust="spacingAndGlyphs">板面标高-2.50</text>
          <text transform="translate(552,221) rotate(-28)" font-size="19" textLength="72" lengthAdjust="spacingAndGlyphs">板厚400mm</text>
          <text transform="translate(524,264) rotate(-27)" font-size="20" textLength="100" lengthAdjust="spacingAndGlyphs">双层双向C12@120</text>
          <text x="576" y="287" font-size="34" textLength="11" lengthAdjust="spacingAndGlyphs">3</text>
          <text x="663" y="295" font-size="34" textLength="9" lengthAdjust="spacingAndGlyphs">1</text>
          <text x="576" y="360" font-size="34" textLength="11" lengthAdjust="spacingAndGlyphs">3</text>
          <text x="509" y="381" font-size="27" textLength="38" lengthAdjust="spacingAndGlyphs">1586</text>
          <text x="627" y="381" font-size="27" textLength="32" lengthAdjust="spacingAndGlyphs">637</text>
          <text x="701" y="381" font-size="27" textLength="28" lengthAdjust="spacingAndGlyphs">300</text>
          <text x="594" y="420" font-size="27" textLength="28" lengthAdjust="spacingAndGlyphs">300</text>
          <text x="657" y="428" font-size="34" textLength="9" lengthAdjust="spacingAndGlyphs">1</text>
          <text x="757" y="421" font-size="27" textLength="35" lengthAdjust="spacingAndGlyphs">2115</text>
          <text transform="translate(906,261) rotate(-90)" font-size="19" textLength="96" lengthAdjust="spacingAndGlyphs">C10@100/150</text>
          <text transform="translate(931,261) rotate(-90)" font-size="18" textLength="50" lengthAdjust="spacingAndGlyphs">N6C14</text>
          <text transform="translate(1192,206) rotate(-90)" font-size="27" textLength="46" lengthAdjust="spacingAndGlyphs">3200</text>
          <text transform="translate(1192,404) rotate(-90)" font-size="27" textLength="37" lengthAdjust="spacingAndGlyphs">1800</text>
          <text transform="translate(1279,216) rotate(-90)" font-size="22" textLength="38" lengthAdjust="spacingAndGlyphs">6510</text>
          <text transform="translate(1295,205) rotate(-90)" font-size="22" textLength="38" lengthAdjust="spacingAndGlyphs">6510</text>
          <text x="976" y="185" font-size="19" textLength="24" lengthAdjust="spacingAndGlyphs">7-2</text>
          <text x="976" y="489" font-size="19" textLength="25" lengthAdjust="spacingAndGlyphs">7-2</text>
          <text x="499" y="453" font-size="18" textLength="26" lengthAdjust="spacingAndGlyphs">7-A</text>
          <text x="1340" y="454" font-size="20" textLength="26" lengthAdjust="spacingAndGlyphs">7-A</text>
        </g>
        <g class="t-g">
          <text x="703" y="173" font-size="26" textLength="104" lengthAdjust="spacingAndGlyphs">C8@100/200(2)</text>
          <text x="704" y="202" font-size="26" textLength="105" lengthAdjust="spacingAndGlyphs">2C20;8C22 3/5</text>
          <text x="706" y="228" font-size="24" textLength="41" lengthAdjust="spacingAndGlyphs">N4C12</text>
          <text x="918" y="428" font-size="22" textLength="36" lengthAdjust="spacingAndGlyphs">4C20</text>
          <text transform="translate(967,410) rotate(-90)" font-size="23" textLength="32" lengthAdjust="spacingAndGlyphs">4C18</text>
          <text transform="translate(1057,285) rotate(-90)" font-size="23" textLength="104" lengthAdjust="spacingAndGlyphs">C10@100/150(2)</text>
          <text transform="translate(1085,285) rotate(-90)" font-size="23" textLength="70" lengthAdjust="spacingAndGlyphs">2C18;4C18</text>
          <text transform="translate(1113,285) rotate(-90)" font-size="23" textLength="40" lengthAdjust="spacingAndGlyphs">N6C14</text>
        </g>
        <g class="t-m">
          <text x="755" y="272" font-size="21" textLength="40" lengthAdjust="spacingAndGlyphs">JL1(1)</text>
          <text x="678" y="500" font-size="23" textLength="108" lengthAdjust="spacingAndGlyphs">JKL1(1) 300x1000</text>
          <text transform="translate(1029,285) rotate(-90)" font-size="23" textLength="116" lengthAdjust="spacingAndGlyphs">JKL2(1) 300x900</text>
          <text transform="translate(926,261) rotate(-90)" font-size="17" textLength="46" lengthAdjust="spacingAndGlyphs">N2(1)</text>
        </g>
        <text class="t-teal" transform="translate(883,261) rotate(-90)" font-size="19" textLength="96" lengthAdjust="spacingAndGlyphs">JKL2 [8700] 3</text>

        <path d="M548 444V420" stroke="#1fd81f" stroke-width="4"/><path d="M548 413l-5 10h10z" fill="#1fd81f"/>
        <path d="M548 444h22" stroke="#ee1010" stroke-width="3.500"/><path d="M578 444l-10-5v10z" fill="#ee1010"/>
        <circle cx="548" cy="444" r="5.500" fill="#1212c8"/>
        <text class="t-ax-x" x="579" y="449" font-size="13">X</text>
        <text class="t-ax-y" x="543" y="412" font-size="13">Y</text>
      </svg>
      <div class="float">
        <svg class="fi"><use href="#f-sphere"/></svg>
        <svg class="fi" viewBox="0 0 24 24"><use href="#f-cube"/><text class="f3d" x="6" y="20">3D</text></svg>
        <svg class="fi"><use href="#f-light"/></svg><i class="caret"></i>
        <svg class="fi"><use href="#f-cube"/></svg><i class="caret"></i>
        <svg class="fi"><use href="#f-rot"/></svg><i class="caret"></i>
        <b></b>
        <svg class="fi"><use href="#f-tab"/></svg>
        <i class="glow"></i>
      </div>
    </div>
    <div class="hsplit"><i></i></div>
    <div class="beam">
      <div class="strip"></div>
      <div class="ptitle">梁平法表格</div>
      <div class="btool">
        <span>复制跨数据</span><span class="off">粘贴跨数据</span><span class="off">输入当前列数据</span><span class="off">删除当前列数据</span><span>页面设置</span><span>调换起始跨</span><span>悬臂钢筋代号</span>
      </div>
      <div class="bgrid">
        <table class="bt">
          <colgroup><col class="w7"><col class="w62"><col class="w61"><col class="w61"><col class="w61"><col class="w61"><col class="w41"><col class="w41"><col class="w41"><col class="w41"><col class="w101"><col class="w81"><col class="w80"><col class="w82"><col class="w80"></colgroup>
          <thead>
            <tr><th class="ind" rowspan="2"></th><th rowspan="2">位置</th><th rowspan="2">名称</th><th rowspan="2" class="act">跨号</th><th colspan="2">标高</th><th colspan="7">构件尺寸(mm)</th><th rowspan="2">下通长筋</th><th></th></tr>
            <tr><th>起点标高</th><th>终点标高</th><th>A1</th><th>A2</th><th>A3</th><th>A4</th><th>跨长</th><th>截面(B*H)</th><th>距左边线距离</th><th class="lft">左支座</th></tr>
          </thead>
          <tbody>
            <tr><th class="ind on">1</th><td>&lt;7-2-2...</td><td>JKL2</td><td class="cur">1</td><td>-3.4</td><td>-3.4</td><td>(500)</td><td>(0)</td><td>(0)</td><td>(500)</td><td>(5760)</td><td>(300*900)</td><td>(150)</td><td>2<sup>虫</sup>18</td><td></td></tr>
          </tbody>
        </table>
        <i class="hbar"></i>
      </div>
    </div>
  </section>
</main>

<footer class="status">
  <div class="st-info"><span class="xy">X = 11591 Y = 1096</span><span>层高<span class="cp" lang="zh-TW">：</span> 4.3</span><span>标高<span class="cp" lang="zh-TW">：</span> -4.3~0</span><span>1(2)</span><span>隐藏<span class="cp" lang="zh-TW">：</span>0</span></div>
  <div class="st-btns">
    <span class="sb b1"><svg class="ic"><use href="#s-corner"/></svg></span>
    <span class="sb b2"><svg class="ic"><use href="#s-box"/></svg><i class="caret"></i></span>
    <span class="sb b3"><svg class="ic"><use href="#s-x"/></svg></span>
    <span class="sb b4"><svg class="ic"><use href="#s-ang"/></svg><i class="caret"></i></span>
    <span class="sb b4"><svg class="ic"><use href="#s-plusb"/></svg><i class="caret"></i></span>
    <span class="sb b5">跨图层选择</span>
    <span class="sb b6">折线选择</span>
  </div>
  <span class="hint">按鼠标左键选择梁图元<span class="cp" lang="zh-TW">，</span>按右键或 ESC 退出<span class="cp" lang="zh-TW">；</span>可以按住</span>
  <div class="ime"><i class="grip"></i><i class="kbd"></i><i class="helpq">?</i><i class="imemin"></i></div>
</footer>

<footer class="taskbar">
  <svg class="orb"><use href="#w-orb"/></svg>
  <span class="tb"><i class="wheel"></i></span>
  <span class="tb"><span class="cadico">CAD</span></span>
  <span class="tb"><svg class="tbi"><use href="#w-chat"/></svg></span>
  <span class="tb act"><svg class="tbi"><use href="#t-logo"/></svg></span>
  <span class="temp">7℃</span>
  <span class="mem">内存使用: 6</span>
  <div class="tray">
    <svg class="ic"><use href="#y-a"/></svg><svg class="ic"><use href="#y-b"/></svg><svg class="ic"><use href="#y-c"/></svg><svg class="ic"><use href="#y-d"/></svg><svg class="ic"><use href="#y-e"/></svg><svg class="ic"><use href="#y-f"/></svg><svg class="ic"><use href="#y-g"/></svg><svg class="ic"><use href="#y-h"/></svg><svg class="ic"><use href="#y-i"/></svg><svg class="ic"><use href="#y-j"/></svg>
  </div>
  <div class="clock"><span>9:29</span><span>2020/7/23</span></div>
  <i class="showdesk"></i>
</footer>
</body>
</html>
```

FILE: styles.css
```css
*{box-sizing:border-box}
html,body{margin:0;padding:0}
body{width:1366px;height:768px;overflow:hidden;background:#fff;color:#222;font:12px/16px "Noto Sans","Noto Sans CJK SC",sans-serif;display:flex;flex-direction:column;position:relative}
ul{list-style:none;margin:0;padding:0}
i{font-style:normal}
.sprite{position:absolute;width:0;height:0}
.ic{width:16px;height:16px;flex:none;display:block}
.cp{font-family:"Noto Sans CJK TC",sans-serif}
.caret{display:inline-block;width:0;height:0;border:3px solid transparent;border-top:4px solid #555;border-bottom:0;flex:none}
.caret.light{border-top-color:#bbb}

/* title */
.top{height:41px;display:flex;flex:none;background:#fff}
.logo{width:46px;height:41px;flex:none;position:relative;padding:8px 0 0 9px;border-bottom:1px solid #e4e4e4;border-right:1px solid #e4e4e4}
.logo-t{width:28px;height:28px;display:block}
.logo-corner{position:absolute;right:4px;bottom:2px;width:0;height:0;border-left:4px solid transparent;border-bottom:4px solid #666}
.top-main{flex:1;min-width:0;display:flex;flex-direction:column;border-bottom:1px solid #dcdcdc}
.qrow{height:22px;display:flex;align-items:flex-start;padding-top:2px}
.qa{margin-left:9px;display:grid;grid-template-columns:22px 25px 21px 20px 12px 22px 13px 20px 23px 24px 24px 21px 25px 24px 10px;align-items:center;height:16px;flex:none}
.qa .caret{margin-left:1px}
.qmore{display:flex;flex-direction:column;align-items:center;gap:2px}
.qmore i:first-child{width:6px;height:1px;background:#555}
.title{margin-left:81px;font-size:12.4px;line-height:18px;white-space:nowrap;color:#222;flex:none}
.winbtns{margin-left:auto;display:grid;grid-template-columns:32px 38px 19px;align-items:center;height:16px;padding-top:6px;flex:none}
.win-min{width:7px;height:2px;background:#555;margin-top:4px}
.win-max{width:9px;height:9px;border:1px solid #555;box-shadow:2px -2px 0 -1px #fff,2px -2px 0 0 #555}
.win-x{font-size:11px;color:#555;line-height:12px}
.trow{height:18px;display:flex;align-items:flex-start}
.tabs{display:grid;grid-template-columns:51px 74px 50px 50px 50px 62px 62px;margin-left:3px;height:18px;line-height:19px;text-align:center;flex:none}
.tabs span{color:#222}
.tabs .on{background:#5aa9f5;color:#fff;border-radius:2px 2px 0 0}
.search{margin-left:506px;width:243px;height:16px;border:1px solid #d4d4d4;display:flex;align-items:center;justify-content:space-between;padding:0 6px 0 2px;color:#c4c4c4;line-height:14px;flex:none}
.search-ic{width:12px;height:12px}
.zic{display:grid;grid-template-columns:31px 23px 22px 19px 28px 23px 16px;margin-left:10px;align-items:center;height:16px;flex:none}
.zq{display:flex;align-items:center;gap:2px;color:#aaa;font-size:16px;font-weight:700}

/* ribbon */
.ribbon{height:97px;flex:none;display:flex;background:linear-gradient(#fff 0,#fff 45%,#e7e9ea 100%);border-bottom:2px solid #a4a6a8}
.rg{display:flex;flex-direction:column;border-right:1px solid #d0d2d4;margin-bottom:1px;flex:none}
.rb{display:grid;grid-auto-flow:column;grid-template-rows:repeat(3,23px);margin-top:3px}
.rl{margin-top:5px;display:flex;justify-content:center;align-items:center;gap:7px;height:18px;color:#333}
.it{display:flex;align-items:center;gap:3px;white-space:nowrap;height:23px}
.it .caret{margin-left:6px}
.it.off{color:#bdbdbd}
.it.tight{gap:0}.it.tight .caret{margin-left:3px}
.it.hot{background:#c5d7ef;height:19px;margin:2px 0 0 -2px;padding-left:2px;width:85px}
.g1{width:182px;padding-left:11px}.g1 .rb{grid-template-columns:78px auto}.g1 .rl{margin-left:-11px}
.g2{width:193px;padding-left:9px}.g2 .rb{grid-template-columns:79px auto}.g2 .rl{margin-left:-9px}
.g3{width:276px;padding-left:10px}.g3 .rb{grid-template-columns:66px 111px auto}.g3 .rl{margin-left:-10px}
.g4{width:237px;padding-left:10px}.g4 .rb{grid-template-columns:54px 54px 54px auto}.g4 .rl{margin-left:-10px}
.g5{width:90px;padding-left:10px}.g5 .rb{grid-template-columns:53px auto}.g5 .rl{margin-left:-10px}
.g6{width:203px;padding-left:9px}.g6 .rb{grid-template-columns:101px auto}.g6 .rl{margin-left:-9px}
.g7{width:177px;padding-left:9px}.g7 .rb{grid-template-columns:87px 24px 24px auto}.g7 .rl{margin-left:-9px}

/* selector */
.selbar{height:28px;flex:none;background:#c8c9cb;display:flex;align-items:center;padding:1px 0 0 2px;border-bottom:1px solid #8e9296}
.dd{width:98px;height:21px;background:#fff;margin-right:2px;display:flex;align-items:center;justify-content:space-between;padding:0 5px 0 4px;flex:none}
.chk{display:flex;align-items:center;gap:3px;margin-left:1px}
.chk .box{width:14px;height:14px;background:#4b96e8;border-radius:2px;position:relative;flex:none}
.chk .box::after{content:"";position:absolute;left:3px;top:3px;width:8px;height:4px;border-left:2px solid #fff;border-bottom:2px solid #fff;transform:rotate(-45deg)}
.note{margin-left:17px}

/* main */
.main{height:532px;flex:none;display:flex;padding-left:1px;background:#fff}
.nav{width:209px;flex:none;display:flex;flex-direction:column;position:relative;border-right:1px solid #c8c8c8;overflow:hidden}
.strip{height:12px;flex:none;background:#d3d4d8;display:flex;justify-content:flex-end;align-items:center;padding-right:5px}
.xx{width:8px;height:8px;display:block}
.ptitle{height:21px;flex:none;background:#f0f0f0;color:#8b8b8b;font-weight:700;padding-left:9px;line-height:22px;border-bottom:1px solid #c8cbd0}
.navtool{height:29px;flex:none;background:#f0f0f0;display:flex;align-items:center;padding:0 2px 0 7px;border-bottom:1px solid #c8cbd0;gap:4px}
.stars{width:13px;height:13px;margin-right:auto;margin-top:2px}
.nbtn{width:24px;height:22px;border:1px solid #6cb1f5;border-radius:4px;display:flex;align-items:center;justify-content:center;background:#f4f8fd}
.tree{padding-top:3px;flex:1;overflow:hidden}
.tree li{height:24px;display:flex;align-items:center;padding-left:3px;gap:6px}
.fold{width:14px;height:14px;flex:none}
.tree .ch{padding-left:40px}
.tree .ch span{display:flex;align-items:center;gap:5px;height:21px;padding:0 2px 0 4px;color:#333}
.tree .sel span{background:#c8d8ef;width:97px}
.vbar{position:absolute;background:#c8c8c8;border-radius:4px;width:8px;display:block}
.navbar{left:197px;top:125px;height:297px}

.mid{width:280px;margin-left:4px;flex:none;display:flex;flex-direction:column;gap:4px}
.comp{height:150px;flex:none;position:relative;border:solid #c4c4c4;border-width:0 1px 1px;display:flex;flex-direction:column;overflow:hidden}
.ptabs{height:23px;flex:none;background:#f0f0f0;display:flex;border-bottom:1px solid #c8cbd0}
.ptabs span{width:65px;text-align:center;line-height:23px;background:#dcdcdc;color:#8b8b8b;font-weight:700;border-right:1px solid #c8cbd0}
.ptabs .on{width:64px;background:#f0f0f0;color:#333}
.ctool{height:28px;flex:none;background:#f0f0f0;display:flex;align-items:center;border-bottom:1px solid #c8cbd0;padding:1px 0 0 7px}
.ct{display:flex;align-items:center;gap:4px;flex:none}
.ct-new{width:63px}.ct-new .caret{margin-left:4px}
.ct-copy{width:51px}.ct-del{width:51px}.ct-lc{width:90px}
.ct .ic{width:14px;height:14px}
.more{font-size:7px;letter-spacing:-1px;margin-left:auto;margin-right:4px}
.csearch{height:19px;flex:none;display:flex;align-items:center;justify-content:space-between;padding:1px 7px 0 2px;color:#8a8a8a;border-bottom:1px solid #c8c8c8}
.search-b{width:12px;height:12px}
.ctree{padding-top:3px}
.ctree li{height:24px;display:flex;align-items:center}
.l1{padding-left:10px}.l2{padding-left:30px}.l3{padding-left:63px}
.tri{width:0;height:0;border-left:6px solid transparent;border-bottom:6px solid #444;margin-right:7px}
.compbar{left:267px;top:98px;height:15px}
.attr{flex:1;min-height:0;position:relative;overflow:hidden;border-right:1px solid #c4c4c4}
.prop{border-collapse:collapse;table-layout:fixed;width:263px}
.c0{width:22px}.c1{width:101px}.c2{width:140px}
.prop th,.prop td{border:1px solid #cfcfcf;height:21px;padding:1px 0 0 3px;font-weight:400;line-height:18px;white-space:nowrap;overflow:hidden;text-align:left}
.prop th{background:#f0f0f0;text-align:center;padding:1px 0 0;color:#333}
.prop thead th{height:20px;color:#444;padding-top:0}
.bl{color:#2a6be8}
sup{font-size:10px;line-height:0;vertical-align:4px;margin:0 1px}
.attrbar{left:268px;top:49px;height:189px}

.split{width:4px;flex:none;background:#c2c6ca;position:relative}
.split i{position:absolute;left:0;top:114px;width:4px;height:70px;background:#5c6268;display:block}
.right{width:868px;flex:none;display:flex;flex-direction:column}
.canvas{height:328px;flex:none;position:relative;overflow:hidden;background:#000}
.cad{display:block}
.cad text{font-family:Roboto,"Liberation Sans","Noto Sans CJK SC",sans-serif;font-weight:300}
.t-w{fill:#f0f0f0}.t-g{fill:#28e628}.t-m{fill:#f018f0}.t-teal{fill:#2f9aa4}.t-ax-x{fill:#ee1010}.t-ax-y{fill:#1fd81f}
.f3d{font:8px "Liberation Sans",sans-serif;fill:#2c3442}
.float{position:absolute;right:0;top:0;width:33px;height:226px;background:#8e9298;border-radius:3px 0 0 3px;display:flex;flex-direction:column;align-items:center;padding-top:10px;overflow:hidden}
.fi{width:24px;height:24px;flex:none;display:block}
.float .fi+.fi{margin-top:6px}
.float .caret{margin:5px 0 7px;border-top-color:#444}
.float b{width:26px;height:1px;background:#666;margin:-3px 0 5px;display:block;flex:none}
.glow{position:absolute;left:22px;top:57px;width:30px;height:30px;border-radius:50%;background:#c7ecec;opacity:.85}
.hsplit{height:4px;flex:none;background:#f0f0f0;position:relative}
.hsplit i{position:absolute;left:385px;top:0;width:100px;height:4px;background:#5c6268;display:block}
.beam{flex:1;min-height:0;display:flex;flex-direction:column;overflow:hidden;border-top:1px solid #c8c8c8}
.beam .strip{height:11px}
.btool{height:28px;flex:none;background:#f0f0f0;display:flex;align-items:center;padding:5px 0 0 6px;gap:8px;border-bottom:1px solid #e0e0e0}
.btool span{white-space:nowrap;flex:none}
.btool .off{color:#b8b8b8}
.bgrid{flex:1;min-height:0;position:relative;overflow:hidden;background:linear-gradient(90deg,#eee 7px,transparent 7px) 0 0/100% 122px no-repeat #fff}
.bt{border-collapse:collapse;table-layout:fixed;width:879px;margin-top:1px}
.w7{width:7px}.w62{width:62px}.w61{width:61px}.w41{width:41px}.w101{width:101px}.w81{width:81px}.w80{width:80px}.w82{width:82px}
.bt th,.bt td{border:1px solid #cfcfcf;height:17px;padding:0;font-weight:400;line-height:16px;white-space:nowrap;overflow:hidden}
.bt th{background:#f0f0f0;color:#333;text-align:center}
.bt td{height:20px;padding:1px 0 0 3px;text-align:left}
.bt .act{background:#7fb9f7;color:#fff;border:1px solid #5a9ee8}
.bt .ind{background:#e8e8e8;padding:0}
.bt .ind.on{background:#7fb9f7;color:#fff;font-weight:700;font-size:11px}
.bt .lft{text-align:left;padding-left:6px}
.bt .cur{box-shadow:inset 0 0 0 1px #e4e4e4}
.hbar{position:absolute;left:15px;top:126px;width:231px;height:8px;background:#c8c8c8;border-radius:4px}

/* status */
.status{height:29px;flex:none;background:#dcdcde;border-top:1px solid #cfcfcf;display:flex;align-items:center;position:relative;overflow:hidden;white-space:nowrap;color:#333}
.st-info{display:grid;grid-template-columns:265px 83px 133px 103px 103px;width:687px}
.xy{padding-left:2px;word-spacing:2.5px}
.st-btns{display:grid;grid-template-columns:28px 42px 31px 39px 39px 76px 67px;flex:none;width:322px}
.sb{height:24px;border:1px solid #a0a0a0;background:#ccc;display:flex;align-items:center;justify-content:center;gap:4px;color:#444}
.b1{width:25px}.b2{width:35px;background:#fff;border-color:#3b8ce8;padding-left:2px}.b3{width:25px;color:#aaa;border-color:#bbb}.b4{width:36px}.b5{width:70px}.b6{width:60px}
.hint{flex:1;overflow:hidden}
.ime{position:absolute;left:1287px;top:4px;width:79px;height:25px;background:#3d3f42;display:flex;align-items:center}
.grip{width:8px;height:18px;margin-left:4px;background:radial-gradient(#aaa 1px,transparent 1.2px) 0 0/4px 4px}
.kbd{width:14px;height:9px;margin-left:14px;background:#bbb;border-radius:2px}
.helpq{width:15px;height:15px;margin-left:8px;background:radial-gradient(circle at 50% 35%,#5a7ae8,#0a1e88);border-radius:50%;color:#fff;text-align:center;line-height:15px;font-weight:700;font-size:11px}
.imemin{width:6px;height:1px;background:#eee;margin-left:6px;box-shadow:0 6px 0 #eee}

/* taskbar */
.taskbar{height:41px;flex:none;display:flex;align-items:center;position:relative;background:linear-gradient(90deg,#1a2b48 0,#22344f 40%,#101a2c 60%,#1c2e4c 70%,#0f1a2b 100%);border-top:1px solid #8c99aa;color:#fff;box-shadow:inset 0 1px 0 #1a2538}
.orb{width:38px;height:38px;margin:0 9px 0 8px;flex:none}
.tb{width:57px;height:37px;margin:0 0 0 5px;flex:none;border:1px solid #5c6878;border-radius:3px;background:linear-gradient(135deg,#58626f 0,#2c3647 45%,#222c3d 100%);display:flex;align-items:center;justify-content:center}
.tb.act{background:linear-gradient(135deg,#9aa2ab 0,#6c747e 50%,#969da6 100%);border-color:#c8ccd2}
.tbi{width:32px;height:32px;display:block}
.wheel{width:32px;height:32px;border-radius:50%;background:radial-gradient(#fff 0 3px,transparent 3.5px),conic-gradient(#d050f0 0 60deg,#f85a5a 60deg 130deg,#fbb030 130deg 190deg,#55c838 190deg 260deg,#3a8cf5 260deg 320deg,#d050f0 320deg);display:block}
.cadico{width:32px;height:32px;background:#1b5fb0;border:2px solid #8aa0b8;color:#fff;font:700 11px/28px "Liberation Sans",sans-serif;text-align:center;display:block}
.temp{position:absolute;left:914px;top:12px;line-height:16px}
.mem{position:absolute;left:970px;top:12px;width:61px;overflow:hidden;white-space:nowrap;line-height:16px}
.tray{position:absolute;left:1036px;top:12px;display:grid;grid-template-columns:repeat(10,24px);align-items:center}
.clock{position:absolute;left:1274px;top:4px;width:78px;display:flex;flex-direction:column;align-items:center;line-height:18px;gap:1px}
.showdesk{position:absolute;left:1352px;top:2px;width:14px;height:37px;border:1px solid #687488;background:#2a3548}
```
